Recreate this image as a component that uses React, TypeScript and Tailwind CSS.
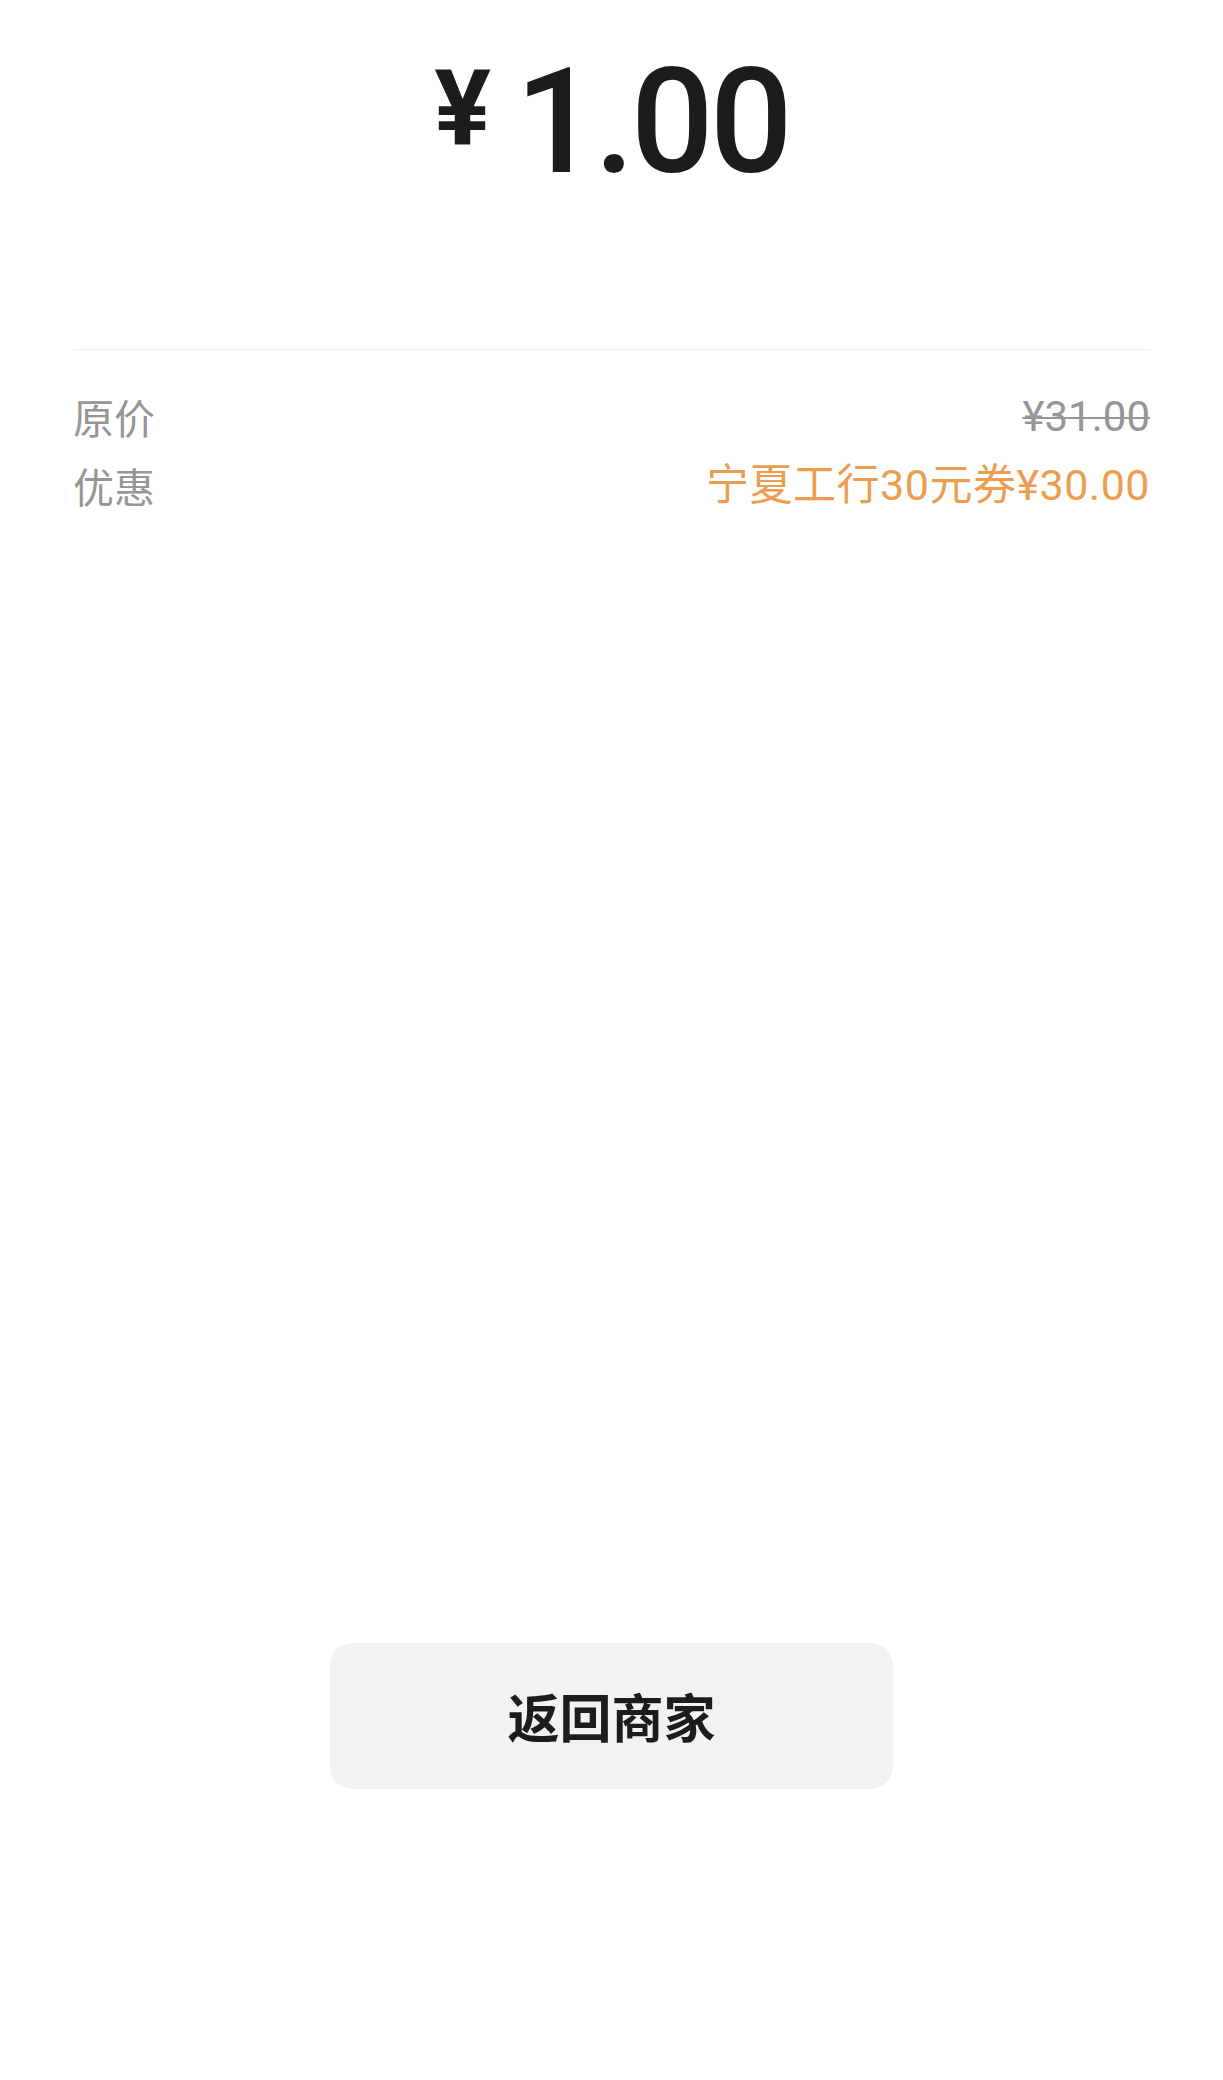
const rows = [
  { label: '原价', value: '¥31.00', strike: true },
  { label: '优惠', value: '宁夏工行30元券¥30.00', strike: false },
]

export default function App() {
  return (
    <div className="min-h-[2080px] w-full bg-white font-['Roboto','Noto_Sans_CJK_SC',sans-serif]">
      {/* amount */}
      <div className="flex justify-center items-start pt-[50px] text-[#1c1c1c]">
        <span className="text-[106px] leading-none font-bold mt-[6px] mr-[24px]">¥</span>
        <span className="text-[146px] leading-none font-medium tracking-[-4px]">1.00</span>
      </div>

      <div className="mx-[73px] mt-[153px] border-t border-[#ededed]" />

      {/* detail rows */}
      <div className="mx-[73px] mt-[32px]">
        {rows.map(r => (
          <div key={r.label} className="flex h-[69px] items-center justify-between">
            <span className="text-[41px] text-[#969696] font-['Noto_Sans_CJK_SC',sans-serif]">{r.label}</span>
            <span
              className={
                r.strike
                  ? 'text-[42px] text-[#969696] line-through decoration-[2px]'
                  : 'text-[43px] text-[#ec9d4f] tracking-[0.5px]'
              }
            >
              {r.value}
            </span>
          </div>
        ))}
      </div>

      <div className="flex justify-center mt-[1123px]">
        <button className="w-[563px] h-[146px] rounded-[22px] bg-[#f2f2f2] text-[52px] font-bold text-[#1c1c1c] font-['Noto_Sans_CJK_SC',sans-serif]">
          返回商家
        </button>
      </div>
    </div>
  )
}
